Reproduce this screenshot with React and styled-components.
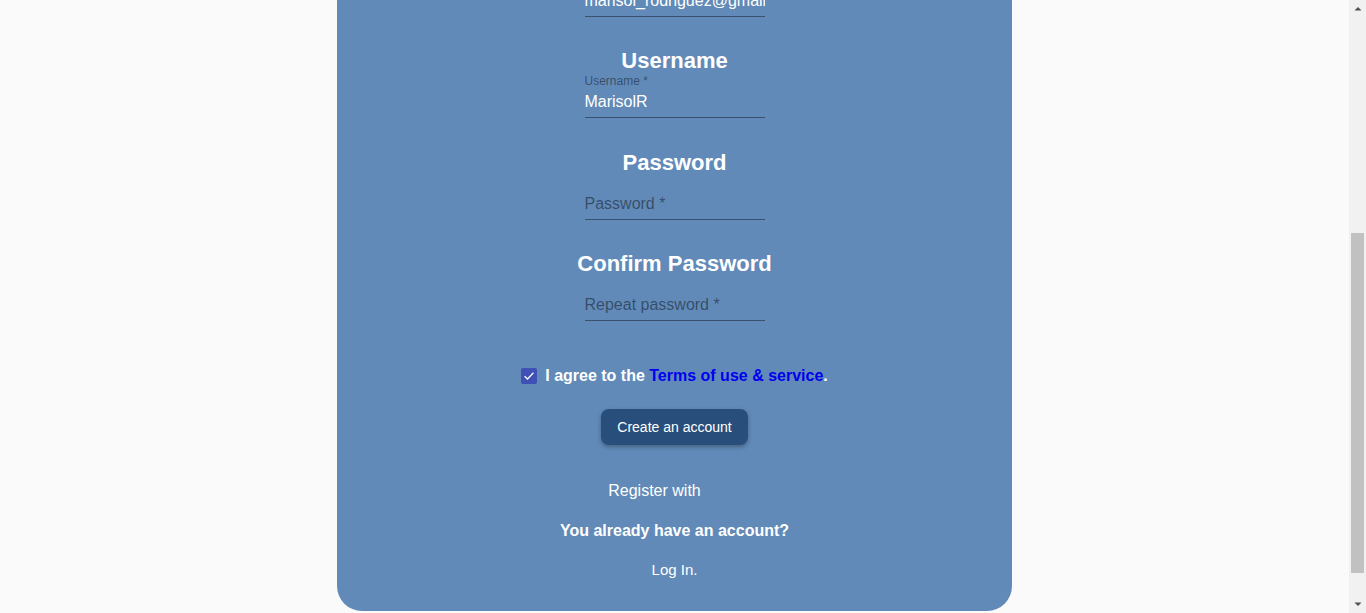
import React, { useLayoutEffect } from "react";
import styled, { createGlobalStyle } from "styled-components";

const GlobalStyle = createGlobalStyle`
  html, body {
    margin: 0;
    padding: 0;
    background: #fafafa;
    font-family: "Liberation Sans", Arial, sans-serif;
    scroll-behavior: auto;
  }
  * { box-sizing: border-box; }
`;

const Page = styled.div`
  margin-right: 17px;
  padding-bottom: 44px;
`;

const Card = styled.form`
  width: 50%;
  margin: 0 auto;
  background: #618ab8;
  border-radius: 25px;
  padding: 40px 0 32px;
  display: flex;
  flex-direction: column;
  align-items: center;
  color: #fff;
`;

const Title = styled.h1`
  margin: 0 0 54.5px;
  font-size: 32px;
  line-height: 40px;
  font-weight: 700;
`;

const Fields = styled.div`
  display: flex;
  flex-direction: column;
  align-items: center;
  gap: 33.5px;
`;

const Block = styled.div`
  display: flex;
  flex-direction: column;
  align-items: center;
`;

const Heading = styled.h2`
  margin: 0;
  padding-top: 1px;
  height: 20px;
  font-size: 22px;
  line-height: 20px;
  font-weight: 700;
  color: #fff;
  white-space: nowrap;
`;

const Field = styled.label`
  display: flex;
  flex-direction: column;
  width: 180px;
  height: 48px;
`;

const SmallLabel = styled.span`
  display: block;
  height: 16px;
  padding-top: 5px;
  font-size: 12px;
  line-height: 12px;
  color: rgba(0, 0, 0, 0.45);
  white-space: nowrap;
`;

const Input = styled.input`
  display: block;
  width: 100%;
  height: 32px;
  margin: 0;
  padding: 5px 0 4px;
  border: none;
  border-bottom: 1px solid rgba(0, 0, 0, 0.42);
  border-radius: 0;
  background: transparent;
  color: #fff;
  font-family: "Liberation Sans", Arial, sans-serif;
  font-size: 16px;
  line-height: 23px;
  outline: none;
  &::placeholder {
    color: rgba(0, 0, 0, 0.45);
    opacity: 1;
  }
`;

const AgreeRow = styled.div`
  margin-top: 43px;
  height: 24px;
  display: flex;
  align-items: center;
  gap: 8px;
  font-size: 16px;
  line-height: 24px;
  font-weight: 700;
`;

const CheckBox = styled.span`
  width: 16px;
  height: 16px;
  border-radius: 2px;
  background: #3f51b5;
  display: flex;
  align-items: center;
  justify-content: center;
`;

const TermsLink = styled.a`
  color: #0000ee;
  text-decoration: none;
  font-weight: 700;
`;

const SubmitButton = styled.button`
  margin-top: 21px;
  height: 36px;
  padding: 0 16px;
  border: none;
  border-radius: 8px;
  background: #284f7c;
  color: #fff;
  font-family: "Liberation Sans", Arial, sans-serif;
  font-size: 14px;
  box-shadow: 0 2px 4px rgba(0, 0, 0, 0.3);
  cursor: pointer;
`;

const RegisterRow = styled.div`
  margin-top: 37px;
  display: flex;
  align-items: center;
  font-size: 16px;
  line-height: 18px;
`;

const SocialIcons = styled.span`
  display: inline-block;
  width: 40px;
  height: 18px;
`;

const AccountText = styled.p`
  margin: ${(p) => p.$mt}px 0 0;
  font-size: ${(p) => p.$size}px;
  line-height: 18px;
  font-weight: ${(p) => (p.$bold ? 700 : 400)};
  color: #fff;
`;

/* drawing of the browser's vertical scrollbar, lying over the page edge */
const ScrollBar = styled.div`
  position: fixed;
  top: 0;
  right: 0;
  width: 17px;
  height: 100vh;
  background: #f1f1f1;
  display: flex;
  flex-direction: column;
`;

const ScrollArrow = styled.div`
  height: 17px;
  flex: none;
  display: flex;
  align-items: center;
  justify-content: center;
`;

const ScrollTrack = styled.div`
  flex: 1;
  padding-top: 216px;
`;

const ScrollThumb = styled.div`
  margin: 0 2px 0 2px;
  height: 340px;
  background: #c1c1c1;
`;

const fields = [
  { heading: "First Name", label: "First name *", value: "Marisol" },
  { heading: "Last Name", label: "Last name *", value: "Rodriguez" },
  { heading: "Email", label: "Email *", value: "marisol_rodriguez@gmail.com" },
  { heading: "Username", label: "Username *", value: "MarisolR" },
  { heading: "Password", label: "Password *", value: "", type: "password" },
  { heading: "Confirm Password", label: "Repeat password *", value: "", type: "password" },
];

export default function App() {
  useLayoutEffect(() => {
    window.scrollTo(0, 389);
    const t = setTimeout(() => window.scrollTo(0, 389), 50);
    return () => clearTimeout(t);
  }, []);

  return (
    <>
      <GlobalStyle />
      <Page>
        <Card onSubmit={(e) => e.preventDefault()}>
          <Title>Sign Up</Title>
          <Fields>
            {fields.map((f) => (
              <Block key={f.heading}>
                <Heading>{f.heading}</Heading>
                <Field>
                  <SmallLabel>{f.value ? f.label : ""}</SmallLabel>
                  <Input
                    type={f.type || "text"}
                    defaultValue={f.value}
                    placeholder={f.value ? "" : f.label}
                  />
                </Field>
              </Block>
            ))}
          </Fields>
          <AgreeRow>
            <CheckBox>
              <svg width="12" height="12" viewBox="0 0 12 12">
                <path d="M1.6 6.2 L4.5 9 L10.4 2.8" fill="none" stroke="#fff" strokeWidth="1.3" />
              </svg>
            </CheckBox>
            <span>
              I agree to the <TermsLink href="#">Terms of use &amp; service</TermsLink>.
            </span>
          </AgreeRow>
          <SubmitButton type="submit">Create an account</SubmitButton>
          <RegisterRow>
            <span>Register with</span>
            <SocialIcons />
          </RegisterRow>
          <AccountText $mt={22} $size={16} $bold>
            You already have an account?
          </AccountText>
          <AccountText $mt={21} $size={15}>
            Log In.
          </AccountText>
        </Card>
      </Page>
      <ScrollBar aria-hidden="true">
        <ScrollArrow>
          <svg width="8" height="5" viewBox="0 0 8 5">
            <path d="M0.5 4.5 L4 1 L7.5 4.5 Z" fill="#505050" />
          </svg>
        </ScrollArrow>
        <ScrollTrack>
          <ScrollThumb />
        </ScrollTrack>
        <ScrollArrow>
          <svg width="8" height="5" viewBox="0 0 8 5">
            <path d="M0.5 0.5 L7.5 0.5 L4 4 Z" fill="#505050" />
          </svg>
        </ScrollArrow>
      </ScrollBar>
    </>
  );
}
